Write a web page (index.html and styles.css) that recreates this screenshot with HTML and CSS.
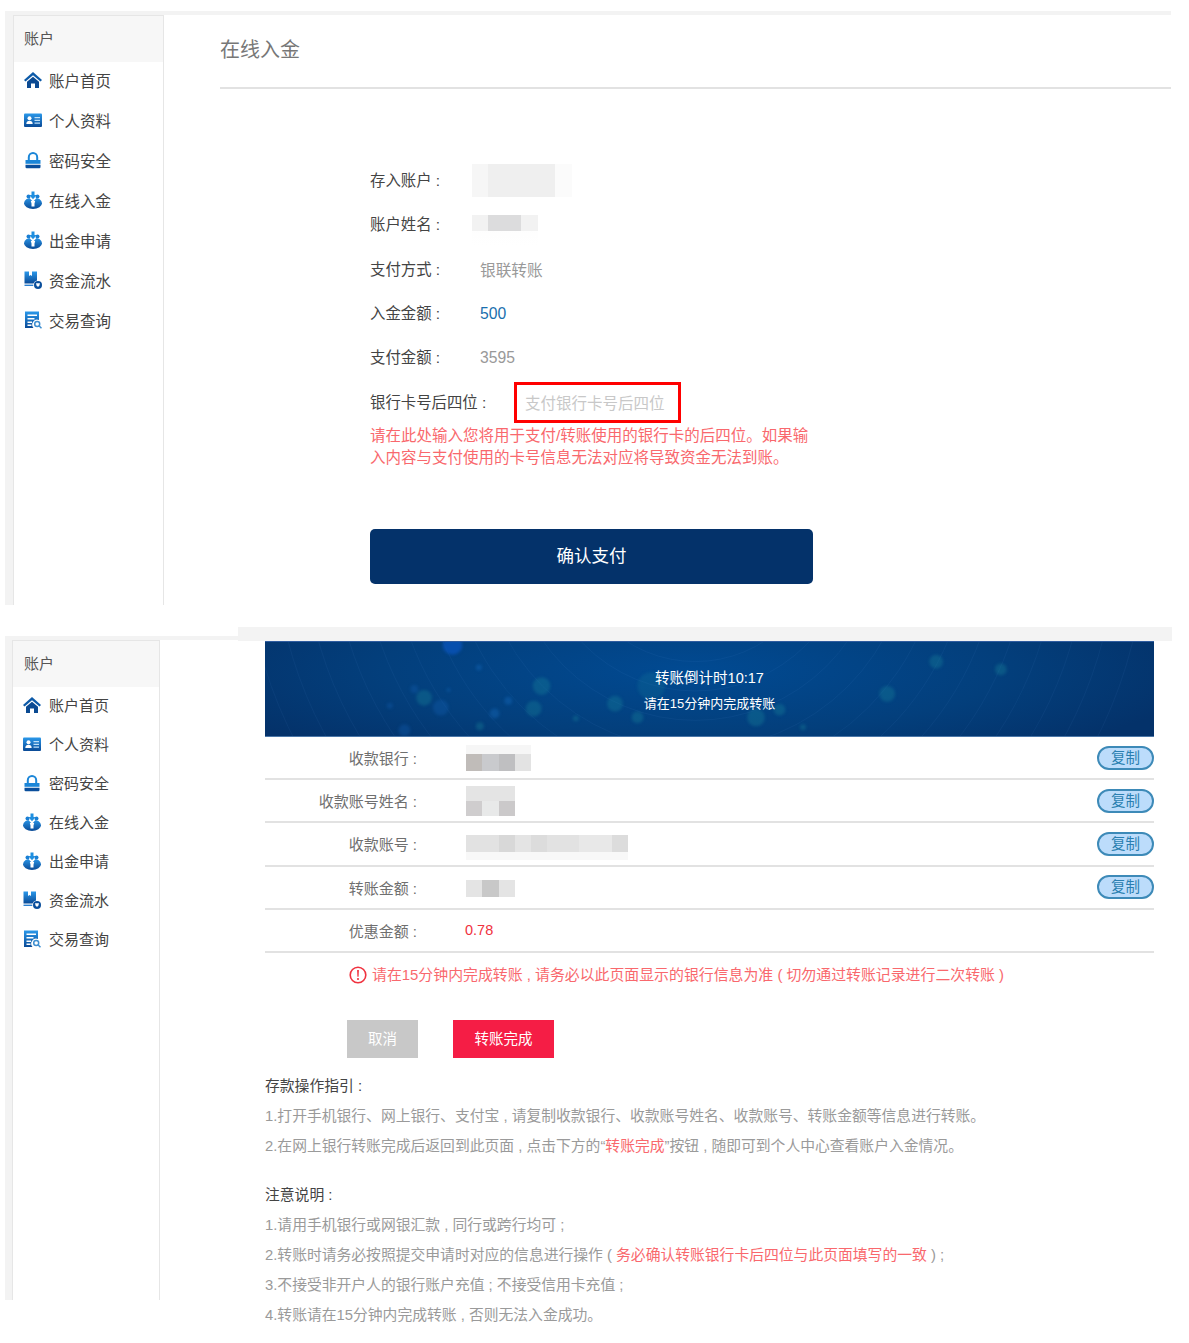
FILE: index.html
```html
<!DOCTYPE html>
<html lang="zh-CN">
<head>
    <meta charset="UTF-8">
    <meta name="viewport" content="width=device-width, initial-scale=1.0">
    <title>在线入金</title>
    <link rel="stylesheet" href="styles.css">
</head>
<body>
    <!-- icon sprite -->
    <svg class="sprite" xmlns="http://www.w3.org/2000/svg">
        <defs>
            <linearGradient id="icon-blue" x1="0" y1="0" x2="0" y2="1">
                <stop offset="0" stop-color="#2a98ea"/>
                <stop offset="1" stop-color="#0a4a96"/>
            </linearGradient>
            <symbol id="i-home" viewBox="0 0 18 18">
                <path fill="#0d5aa8" d="M9 1 0 9l1.500 1.600L9 4.200l7.500 6.400L18 9z"/>
                <path fill="#0b4a92" d="M3 10.800 9 5.700l6 5.100V17h-4v-4.500H7V17H3z"/>
            </symbol>
            <symbol id="i-card" viewBox="0 0 18 18">
                <rect fill="url(#icon-blue)" x="0" y="2.500" width="18" height="13.500" rx="1"/>
                <circle fill="#fff" cx="5.500" cy="7.300" r="2"/>
                <path fill="#fff" d="M2.300 13c0-2.200 1.400-3.300 3.200-3.300s3.200 1.100 3.200 3.300z"/>
                <path fill="#bfe0f8" d="M10.500 6h5.500v1.300h-5.500zM10.500 8.700h5.500V10h-5.500zM10.500 11.400h5.500v1.300h-5.500z"/>
            </symbol>
            <symbol id="i-lock" viewBox="0 0 18 18">
                <path fill="none" stroke="#1b86d8" stroke-width="2" d="M4.800 9V6.300a4.200 4.200 0 0 1 8.400 0V9"/>
                <path fill="#1b86d8" d="M1.500 9h15v3.800h-15z"/>
                <path fill="#0a4f9c" d="M1.500 13.800h15V16a1.200 1.200 0 0 1-1.200 1.200H2.700A1.200 1.200 0 0 1 1.500 16z"/>
            </symbol>
            <symbol id="i-bag" viewBox="0 0 18 18">
                <circle fill="#1a7fd4" cx="4.500" cy="5.500" r="2"/>
                <circle fill="#1a7fd4" cx="13.500" cy="5.500" r="2"/>
                <ellipse fill="url(#icon-blue)" cx="9" cy="12.200" rx="9" ry="5.800"/>
                <path fill="#fff" d="M5.500 7h7L9 11z"/>
                <path fill="#1f8fe0" d="M7.500 0.500h3v3.500h2L9 8.300 5.500 4h2z"/>
                <path fill="#fff" d="M6.800 10h4.400l-.7 2.500v3h-3v-3z"/>
            </symbol>
            <symbol id="i-flow" viewBox="0 0 18 18">
                <path fill="url(#icon-blue)" d="M0.500 0.500h4.500v4.500l1.500-1 1.500 1V0.500h5v9a5 5 0 0 0-3.500 3H0.500z"/>
                <path fill="#2a7fd0" d="M0.500 13.600h8.800v1.400H0.500z"/>
                <circle fill="#0a4f9c" cx="14" cy="14" r="4"/>
                <path fill="#fff" d="M12 12.300h4l-.6 2.200L14 16l-1.400-1.500z"/>
            </symbol>
            <symbol id="i-query" viewBox="0 0 18 18">
                <path fill="url(#icon-blue)" d="M1 0.500h14v8.500a5 5 0 0 0-5.500 8H1z"/>
                <path fill="#fff" d="M3.500 3.500h9.500v1.500H3.500zM3.500 7h7v1.500h-7zM3.500 10.500h4.500V12H3.500zM3.500 13.500h4V15h-4z"/>
                <circle fill="none" stroke="#3f8fd0" stroke-width="1.500" cx="13.200" cy="13" r="2.500"/>
                <path stroke="#3f8fd0" stroke-width="1.500" d="M15 14.800 17.500 17.300"/>
            </symbol>
        </defs>
    </svg>

    <!-- first capture: confirm form -->
    <section class="capture capture-form">
        <div class="capture-top"></div>
        <div class="capture-body">
            <aside class="side-nav">
                <div class="side-nav-title">账户</div>
                <ul class="side-nav-menu">
                    <li><svg class="side-icon"><use href="#i-home"/></svg>账户首页</li>
                    <li><svg class="side-icon"><use href="#i-card"/></svg>个人资料</li>
                    <li><svg class="side-icon"><use href="#i-lock"/></svg>密码安全</li>
                    <li><svg class="side-icon"><use href="#i-bag"/></svg>在线入金</li>
                    <li><svg class="side-icon"><use href="#i-bag"/></svg>出金申请</li>
                    <li><svg class="side-icon"><use href="#i-flow"/></svg>资金流水</li>
                    <li><svg class="side-icon"><use href="#i-query"/></svg>交易查询</li>
                </ul>
            </aside>
            <main class="form-main">
                <h2 class="form-heading">在线入金</h2>
                <div class="form-fields">
                    <div class="field">
                        <span class="field-label">存入账户 :</span>
                        <span class="mosaic mosaic-account"></span>
                    </div>
                    <div class="field">
                        <span class="field-label">账户姓名 :</span>
                        <span class="mosaic mosaic-name"></span>
                    </div>
                    <div class="field">
                        <span class="field-label">支付方式 :</span>
                        <span class="field-value">银联转账</span>
                    </div>
                    <div class="field">
                        <span class="field-label">入金金额 :</span>
                        <span class="field-value field-value-blue">500</span>
                    </div>
                    <div class="field">
                        <span class="field-label">支付金额 :</span>
                        <span class="field-value">3595</span>
                    </div>
                    <div class="field field-card">
                        <span class="field-label field-label-wide">银行卡号后四位 :</span>
                        <input type="text" class="card-input" placeholder="支付银行卡号后四位">
                    </div>
                    <p class="form-note">请在此处输入您将用于支付/转账使用的银行卡的后四位。如果输入内容与支付使用的卡号信息无法对应将导致资金无法到账。</p>
                    <button class="confirm-button">确认支付</button>
                </div>
            </main>
        </div>
    </section>

    <!-- second capture: transfer details -->
    <section class="capture-transfer">
        <div class="transfer-left">
            <div class="capture-top"></div>
            <div class="capture-body">
                <aside class="side-nav side-nav-small">
                    <div class="side-nav-title">账户</div>
                    <ul class="side-nav-menu">
                        <li><svg class="side-icon"><use href="#i-home"/></svg>账户首页</li>
                        <li><svg class="side-icon"><use href="#i-card"/></svg>个人资料</li>
                        <li><svg class="side-icon"><use href="#i-lock"/></svg>密码安全</li>
                        <li><svg class="side-icon"><use href="#i-bag"/></svg>在线入金</li>
                        <li><svg class="side-icon"><use href="#i-bag"/></svg>出金申请</li>
                        <li><svg class="side-icon"><use href="#i-flow"/></svg>资金流水</li>
                        <li><svg class="side-icon"><use href="#i-query"/></svg>交易查询</li>
                    </ul>
                </aside>
            </div>
        </div>
        <div class="transfer-right">
            <div class="transfer-band"></div>
            <div class="transfer-main">
                <div class="banner">
                    <svg class="banner-art" viewBox="0 0 889 96" xmlns="http://www.w3.org/2000/svg">
                        <g fill="none" stroke="#7fb8ff" stroke-opacity="0.06">
                            <circle cx="430" cy="-110" r="130"/>
                            <circle cx="430" cy="-110" r="160"/>
                            <circle cx="430" cy="-110" r="190"/>
                            <circle cx="430" cy="-110" r="220"/>
                            <circle cx="430" cy="-110" r="250"/>
                            <circle cx="430" cy="-110" r="280"/>
                            <circle cx="430" cy="-110" r="310"/>
                            <circle cx="430" cy="-110" r="340"/>
                            <circle cx="430" cy="-110" r="370"/>
                            <circle cx="430" cy="-110" r="400"/>
                            <circle cx="430" cy="-110" r="430"/>
                            <circle cx="430" cy="-110" r="460"/>
                        </g>
                        <g class="banner-dots" fill="#1c8f9e" fill-opacity="0.3">
                            <circle cx="182" cy="3" r="10" fill="#0a55c0" fill-opacity="0.7"/>
                            <circle cx="153" cy="57" r="8"/>
                            <circle cx="170" cy="67" r="8" fill="#1565b8"/>
                            <circle cx="273" cy="45" r="9"/>
                            <circle cx="265" cy="68" r="8"/>
                            <circle cx="348" cy="63" r="8"/>
                            <circle cx="371" cy="77" r="6"/>
                            <circle cx="385" cy="45" r="14" fill-opacity="0.18"/>
                            <circle cx="676" cy="20" r="7"/>
                            <circle cx="742" cy="28" r="6"/>
                            <circle cx="626" cy="53" r="8"/>
                            <circle cx="516" cy="69" r="6"/>
                            <circle cx="492" cy="77" r="9"/>
                            <circle cx="540" cy="87" r="3"/>
                            <circle cx="209" cy="26" r="3" fill="#1a78d0"/>
                            <circle cx="143" cy="48" r="4" fill="#1565b8"/>
                            <circle cx="118" cy="65" r="3" fill="#1565b8"/>
                            <circle cx="225" cy="73" r="5" fill="#1a78d0"/>
                            <circle cx="308" cy="78" r="3"/>
                            <circle cx="210" cy="86" r="4"/>
                            <circle cx="239" cy="60" r="4" fill="#1a78d0"/>
                            <circle cx="133" cy="90" r="6" fill="#1565b8"/>
                            <circle cx="178" cy="49" r="2" fill="#1a78d0"/>
                        </g>
                    </svg>
                    <div class="banner-count">转账倒计时10:17</div>
                    <div class="banner-tip">请在15分钟内完成转账</div>
                </div>

                <div class="pay-row">
                    <span class="pay-label">收款银行 :</span>
                    <span class="mosaic mosaic-bank"></span>
                    <button class="copy-button">复制</button>
                </div>
                <div class="pay-row">
                    <span class="pay-label">收款账号姓名 :</span>
                    <span class="mosaic mosaic-holder"></span>
                    <button class="copy-button">复制</button>
                </div>
                <div class="pay-row">
                    <span class="pay-label">收款账号 :</span>
                    <span class="mosaic mosaic-number"></span>
                    <button class="copy-button">复制</button>
                </div>
                <div class="pay-row">
                    <span class="pay-label">转账金额 :</span>
                    <span class="mosaic mosaic-amount"></span>
                    <button class="copy-button">复制</button>
                </div>
                <div class="pay-row">
                    <span class="pay-label">优惠金额 :</span>
                    <span class="pay-discount">0.78</span>
                </div>

                <div class="pay-alert">
                    <svg class="alert-icon" viewBox="0 0 18 18" xmlns="http://www.w3.org/2000/svg">
                        <circle cx="9" cy="9" r="7.800" fill="none" stroke="#f0323f" stroke-width="1.600"/>
                        <path fill="#f0323f" d="M8.100 4h1.800l-.3 6.800H8.400z"/>
                        <circle cx="9" cy="13" r="1.100" fill="#f0323f"/>
                    </svg>
                    <span>请在15分钟内完成转账 , 请务必以此页面显示的银行信息为准 ( 切勿通过转账记录进行二次转账 )</span>
                </div>

                <div class="pay-actions">
                    <button class="btn-cancel">取消</button>
                    <button class="btn-done">转账完成</button>
                </div>

                <div class="guide">
                    <h4 class="guide-title">存款操作指引 :</h4>
                    <p>1.打开手机银行、网上银行、支付宝 , 请复制收款银行、收款账号姓名、收款账号、转账金额等信息进行转账。</p>
                    <p>2.在网上银行转账完成后返回到此页面 , 点击下方的“<em>转账完成</em>”按钮 , 随即可到个人中心查看账户入金情况。</p>
                </div>
                <div class="guide guide-notes">
                    <h4 class="guide-title">注意说明 :</h4>
                    <p>1.请用手机银行或网银汇款 , 同行或跨行均可 ;</p>
                    <p>2.转账时请务必按照提交申请时对应的信息进行操作 ( <em>务必确认转账银行卡后四位与此页面填写的一致</em> ) ;</p>
                    <p>3.不接受非开户人的银行账户充值 ; 不接受信用卡充值 ;</p>
                    <p>4.转账请在15分钟内完成转账 , 否则无法入金成功。</p>
                </div>
            </div>
        </div>
    </section>
</body>
</html>
```

FILE: styles.css
```css
:root {
    --band: #f3f3f3;
    --line: #e2e2e2;
    --navy: #04326a;
    --red-text: #f9686d;
    --grey-text: #9a9a9a;
    --dark-text: #444;
}

* {
    margin: 0;
    padding: 0;
    box-sizing: border-box;
}

body {
    font-family: "Liberation Sans", "Noto Sans CJK SC", sans-serif;
    background-color: #fff;
    color: var(--dark-text);
    font-size: 15px;
    height: 1343px;
    overflow: hidden;
}

.sprite {
    display: block;
    width: 0;
    height: 0;
}

/* shared capture frame */
.capture {
    width: 1166px;
    height: 594px;
    margin: 11px 0 0 5px;
}

.capture-top {
    height: 4px;
    background-color: var(--band);
}

.capture-body {
    display: flex;
    height: 590px;
    padding-left: 8px;
    background: linear-gradient(90deg, var(--band) 8px, #fff 8px);
}

/* side nav */
.side-nav {
    flex: none;
    width: 151px;
    background-color: #fff;
    border: 1px solid #e6e6e6;
    border-bottom: none;
}

.side-nav-title {
    height: 46px;
    line-height: 46px;
    padding-left: 10px;
    background-color: #f7f7f7;
    color: #555;
    font-size: 15px;
}

.side-nav-menu {
    margin-top: -2px;
    list-style: none;
}

.side-nav-menu li {
    display: flex;
    align-items: center;
    height: 40px;
    padding-left: 10px;
    font-size: 15.500px;
    color: #444;
    white-space: nowrap;
}

.side-icon {
    width: 18px;
    height: 18px;
    margin-right: 7px;
    flex: none;
}

.side-nav-small {
    width: 148px;
}

.side-nav-small .side-nav-title {
    padding-left: 11px;
}

.side-nav-small .side-nav-menu li {
    height: 39px;
    font-size: 15px;
}

.side-nav-small .side-icon {
    margin-right: 8px;
}

/* confirm form */
.form-main {
    flex: 1;
    padding-left: 56px;
}

.form-heading {
    height: 74px;
    padding-top: 21px;
    font-size: 20px;
    line-height: 28px;
    font-weight: normal;
    color: #777;
    border-bottom: 2px solid var(--line);
}

.form-fields {
    padding: 68px 0 0 150px;
}

.field {
    display: flex;
    align-items: center;
    height: 44.300px;
    font-size: 15.400px;
}

.field-label {
    width: 110px;
    flex: none;
    color: #444;
}

.field-label-wide {
    width: 144px;
}

.field-value {
    padding-top: 3px;
    color: #999;
    font-size: 15.700px;
}

.field-value-blue {
    color: #1a6fae;
}

.card-input {
    width: 167px;
    height: 41px;
    margin-top: 3px;
    padding: 3px 0 0 8px;
    border: 3px solid #f00;
    font-family: inherit;
    font-size: 15.500px;
    outline: none;
}

.card-input::placeholder {
    color: #c8c8c8;
}

.form-note {
    width: 445px;
    margin-top: 2px;
    font-size: 15.500px;
    line-height: 22px;
    color: var(--red-text);
}

.confirm-button {
    display: block;
    width: 443px;
    height: 55px;
    margin-top: 60px;
    padding-bottom: 3px;
    border: none;
    border-radius: 5px;
    background-color: var(--navy);
    color: #fff;
    font-family: inherit;
    font-size: 17.500px;
}

/* blurred out values */
.mosaic {
    display: block;
    flex: none;
}

.mosaic-account {
    width: 100px;
    height: 33px;
    margin: 3px 0 0 -8px;
    background: linear-gradient(90deg, #f6f6f6 16px, #efefef 16px 83px, #fbfbfb 83px);
}

.mosaic-name {
    width: 66px;
    height: 30px;
    margin: 13px 0 0 -8px;
    background:
        linear-gradient(90deg, #f2f2f2 16px, #dcdcdd 16px 49px, #f2f2f2 49px) 0 0 / 100% 16px no-repeat,
        linear-gradient(180deg, #fcfcfc, #fff);
}

.mosaic-bank {
    width: 65px;
    height: 26px;
    background:
        linear-gradient(90deg, #c0bcb9 16px, #c9cacd 16px 33px, #bfbfc1 33px 49px, #e3e3e3 49px) 0 100% / 100% 17px no-repeat,
        #f6f6f6;
}

.mosaic-holder {
    width: 49px;
    height: 30px;
    background:
        linear-gradient(90deg, #cfcdce 16px, #e8e9e9 16px 33px, #cbc9ca 33px) 0 100% / 100% 15px no-repeat,
        #e4e4e4;
}

.mosaic-number {
    width: 162px;
    height: 25px;
    margin-top: 7px;
    background:
        linear-gradient(90deg, #e2e2e2 33px, #d8d8d8 33px 49px, #e4e4e4 49px 65px, #dcdcdc 65px 81px, #e2e2e2 81px 113px, #e8e8e8 113px 146px, #dcdcdc 146px) 0 0 / 100% 17px no-repeat,
        #f8f8f8;
}

.mosaic-amount {
    width: 49px;
    height: 17px;
    margin-top: 2px;
    background: linear-gradient(90deg, #e4e4e4 16px, #c8c8c8 16px 33px, #e4e4e4 33px);
}

/* transfer capture */
.capture-transfer {
    display: flex;
    align-items: flex-start;
    width: 1172px;
    margin-top: 22px;
}

.transfer-left {
    flex: none;
    width: 238px;
    height: 673px;
    margin-top: 9px;
    padding-left: 5px;
}

.transfer-left .capture-body {
    height: 660px;
    padding-left: 7px;
    background: linear-gradient(90deg, var(--band) 7px, #fff 7px);
}

.transfer-right {
    flex: 1;
}

.transfer-band {
    height: 14px;
    background-color: var(--band);
}

.transfer-main {
    padding: 0 18px 0 27px;
}

.banner {
    position: relative;
    height: 96px;
    padding-top: 25px;
    border-top: 1px solid #2f5c9f;
    border-bottom: 1px solid #4b77a8;
    background: radial-gradient(ellipse 58% 110% at 48% 30%, #014a92 0%, #033f7c 60%, #04326a 100%);
    color: #fff;
    text-align: center;
    overflow: hidden;
}

.banner-art {
    position: absolute;
    top: 0;
    left: 0;
    width: 100%;
    height: 100%;
}

.banner-dots {
    filter: blur(1.500px);
}

.banner-count,
.banner-tip {
    position: relative;
}

.banner-count {
    font-size: 14.500px;
    line-height: 22px;
}

.banner-tip {
    margin-top: 4px;
    font-size: 13px;
    line-height: 22px;
}

.pay-row {
    display: flex;
    align-items: center;
    height: 43.200px;
    border-bottom: 2px solid var(--line);
}

.pay-label {
    width: 152px;
    margin-right: 49px;
    flex: none;
    text-align: right;
    color: #6f6f6f;
    font-size: 15px;
}

.pay-discount {
    margin-left: -1px;
    color: #f0323f;
    font-size: 14.500px;
}

.copy-button {
    width: 57px;
    height: 24px;
    margin-left: auto;
    border: 2px solid #3d8ab8;
    border-radius: 12px;
    background-color: #bcdcfb;
    color: #2a7fb0;
    font-family: inherit;
    font-size: 14.500px;
    line-height: 18px;
}

.pay-alert {
    display: flex;
    align-items: center;
    height: 42px;
    padding-left: 84px;
    color: var(--red-text);
    font-size: 14.900px;
    white-space: nowrap;
}

.alert-icon {
    width: 18px;
    height: 18px;
    margin: 2px 5px 0 0;
    flex: none;
}

.pay-actions {
    display: flex;
    gap: 35px;
    margin-top: 25px;
    padding-left: 82px;
}

.btn-cancel,
.btn-done {
    height: 38px;
    padding-bottom: 2px;
    border: none;
    color: #fff;
    font-family: inherit;
    font-size: 14.500px;
}

.btn-cancel {
    width: 71px;
    background-color: #c8c8c8;
}

.btn-done {
    width: 101px;
    background-color: #f51d45;
}

.guide {
    margin-top: 14px;
    line-height: 29.800px;
    font-size: 14.800px;
    color: var(--grey-text);
    white-space: nowrap;
}

.guide-notes {
    margin-top: 20px;
}

.guide-title {
    font-weight: normal;
    color: #444;
}

.guide em {
    font-style: normal;
    color: var(--red-text);
}
```
